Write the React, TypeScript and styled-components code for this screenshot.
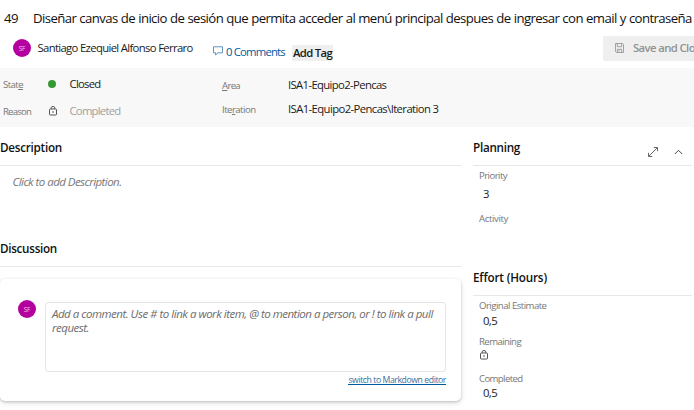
import React from "react";
import styled, { createGlobalStyle } from "styled-components";

const GlobalStyle = createGlobalStyle`
  * { box-sizing: border-box; }
  body {
    margin: 0;
    overflow: hidden;
    background: #fff;
    color: #1b1b1b;
    font-family: "Open Sans", "Noto Sans", sans-serif;
  }
`;

const Page = styled.div`
  width: 694px;
  height: 410px;
  overflow: hidden;
`;

const TitleRow = styled.header`
  display: flex;
  height: 36px;
  padding: 9px 0 0 4px;
  font-size: 13.2px;
  line-height: 18px;
  letter-spacing: -0.6px;
  word-spacing: 0.3px;
  white-space: nowrap;
  color: #111;
`;

const ItemId = styled.span`
  width: 29px;
`;

const Toolbar = styled.div`
  display: flex;
  align-items: flex-start;
  height: 32px;
  padding-left: 13px;
  white-space: nowrap;

  > * { flex: none; }
`;

const Avatar = styled.div<{ $top: number }>`
  display: flex;
  align-items: center;
  justify-content: center;
  flex: none;
  width: 18px;
  height: 18px;
  margin-top: ${(p) => p.$top}px;
  border-radius: 50%;
  background: #b4009e;
  color: #f0c4ea;
  font-size: 6.5px;
  letter-spacing: -0.2px;
`;

const Body = styled.span<{ $ls: number; $muted?: boolean }>`
  font-size: 11.3px;
  line-height: 16px;
  letter-spacing: ${(p) => p.$ls}px;
  white-space: nowrap;
  color: ${(p) => (p.$muted ? "#a0a0a0" : "#1b1b1b")};
`;

const Assignee = styled(Body)`
  width: 175.5px;
  margin: 4px 0 0 6.5px;
`;

const Comments = styled.a`
  display: flex;
  width: 79px;
  padding-top: 8px;
  color: #005a9e;
  font-size: 11.3px;
  line-height: 16px;
  letter-spacing: -0.8px;

  svg { margin: 2px 3px 0 0; }
`;

const TagButton = styled.button`
  width: 41px;
  height: 16px;
  margin-top: 9px;
  padding: 0 0 0 1px;
  border: 0;
  background: #efefef;
  color: #1b1b1b;
  font: 600 11.3px/16px "Open Sans", sans-serif;
  letter-spacing: -0.67px;
  text-align: left;
`;

const SaveButton = styled.button`
  display: flex;
  width: 110px;
  height: 25px;
  margin-left: 270px;
  padding: 4px 0 0 12px;
  border: 0;
  border-radius: 2px;
  background: #efefef;
  color: #929292;
  font: 600 11.3px/16px "Open Sans", sans-serif;
  letter-spacing: -0.6px;

  svg { margin: 3px 9px 0 0; }
`;

const Summary = styled.section`
  display: grid;
  grid-template-columns: 222px 1fr;
  height: 59px;
  background: #f8f8f8;
`;

const SummaryColumn = styled.div<{ $top: number; $rowHeight: number }>`
  display: grid;
  grid-auto-rows: ${(p) => p.$rowHeight}px;
  align-content: start;
  padding-top: ${(p) => p.$top}px;
`;

const StateRow = styled.div`
  display: grid;
  grid-template-columns: 45px 21.5px 1fr;
  padding-left: 3px;
`;

const PathRow = styled.div`
  display: grid;
  grid-template-columns: 66px 1fr;
`;

const Label = styled.label<{ $ls: number }>`
  display: block;
  padding-top: 1px;
  color: #777;
  font-size: 9.6px;
  line-height: 16px;
  letter-spacing: ${(p) => p.$ls}px;
  white-space: nowrap;
`;

const StateDot = styled.i`
  width: 8px;
  height: 8px;
  margin: 4px 0 0;
  border-radius: 50%;
  background: #339933;
`;

const LockCell = styled.span`
  padding: 3px 0 0 1px;

  svg { display: block; }
`;

const Main = styled.main`
  display: grid;
  grid-template-columns: 461px 219px;
  column-gap: 12px;
`;

const Heading = styled.h2<{ $ls: number }>`
  margin: 0;
  color: #111;
  font-size: 11.7px;
  font-weight: 600;
  line-height: 16px;
  letter-spacing: ${(p) => p.$ls}px;
  white-space: nowrap;
`;

const SectionHead = styled.div<{ $height: number; $top: number }>`
  display: flex;
  justify-content: space-between;
  height: ${(p) => p.$height}px;
  padding-top: ${(p) => p.$top}px;
  border-bottom: 1px solid #e8e8e8;
`;

const HeadIcons = styled.div`
  display: flex;
  gap: 16px;
  padding: 8px 9px 0 0;
`;

const DescriptionBody = styled.p`
  height: 64px;
  margin: 0;
  padding: 8px 0 0 12.5px;
  color: #777;
  font-size: 11.5px;
  font-style: italic;
  line-height: 16px;
  letter-spacing: -0.55px;
`;

const CommentCard = styled.section`
  display: flex;
  height: 122px;
  margin-top: 12px;
  padding-left: 18px;
  border-radius: 5px;
  box-shadow: 0 1px 3px rgba(0, 0, 0, 0.22), 0 3px 7px rgba(0, 0, 0, 0.08);
`;

const Editor = styled.div`
  width: 401px;
  margin: 23px 0 0 9px;
`;

const CommentInput = styled.div`
  height: 70px;
  padding: 4px 6px;
  border: 1px solid #e4e4e4;
  border-radius: 3px;
  color: #6c6c6c;
  font-size: 11.5px;
  font-style: italic;
  line-height: 14px;
  letter-spacing: -0.49px;
`;

const SwitchRow = styled.div`
  display: flex;
  justify-content: flex-end;
  padding-top: 3px;
`;

const SwitchLink = styled.a`
  height: 10px;
  border-bottom: 1px solid #005a9e;
  color: #3a6f9f;
  font-size: 8.7px;
  line-height: 10px;
  letter-spacing: -0.43px;
  white-space: nowrap;
`;

const Fields = styled.div<{ $height: number }>`
  height: ${(p) => p.$height}px;
  padding: 2px 0 0 6px;
`;

const Field = styled.div<{ $height: number; $gap?: number }>`
  height: ${(p) => p.$height}px;

  label { padding-top: 0; }

  > span {
    display: block;
    margin-top: ${(p) => p.$gap ?? 0}px;
    padding-left: 4px;
  }

  > svg { display: block; margin: 0 0 0 1px; }
`;

const LockIcon = () => (
  <svg width="8" height="10" viewBox="0 0 8 10" fill="none" stroke="#555" strokeWidth="1">
    <rect x=".5" y="3" width="7" height="6" rx="0.8" />
    <path d="M2.2 3V1.9a1.8 1.4 0 0 1 3.6 0V3" />
    <rect x="3.4" y="5.4" width="1.2" height="1.2" fill="#222" stroke="none" />
  </svg>
);

const CommentIcon = () => (
  <svg width="10" height="10" viewBox="0 0 10 10" fill="none" stroke="#4f87b5" strokeWidth="0.9">
    <path d="M.5.8h9v6H5L2.6 9V6.8H.5z" />
  </svg>
);

const SaveIcon = () => (
  <svg width="9" height="10" viewBox="0 0 9 10" fill="none" stroke="#999" strokeWidth="0.9">
    <path d="M.5.5h7l1 1v8h-7l-1-1z" />
    <path d="M2.3.5v3.2h4.4V.5M2.3 9.5V6.3h4.4v3.2M4 7v1.5" />
  </svg>
);

const ExpandIcon = () => (
  <svg width="10" height="10" viewBox="0 0 10 10" fill="none" stroke="#555" strokeWidth="0.9">
    <path d="M.8 9.2 9.2.8M5.8.5h3.7v3.7M.5 5.8v3.7h3.7" />
  </svg>
);

const ChevronIcon = () => (
  <svg width="9" height="10" viewBox="0 0 9 10" fill="none" stroke="#444" strokeWidth="1">
    <path d="M.8 7 4.5 3.3 8.2 7" />
  </svg>
);

export default function App() {
  return (
    <Page>
      <GlobalStyle />
      <TitleRow>
        <ItemId>49</ItemId>
        <span>
          Diseñar canvas de inicio de sesión que permita acceder al menú principal despues de ingresar con email y
          contraseña
        </span>
      </TitleRow>
      <Toolbar>
        <Avatar $top={3}>SF</Avatar>
        <Assignee $ls={-0.66}>Santiago Ezequiel Alfonso Ferraro</Assignee>
        <Comments>
          <CommentIcon />0 Comments
        </Comments>
        <TagButton>Add Tag</TagButton>
        <SaveButton>
          <SaveIcon />
          Save and Close
        </SaveButton>
      </Toolbar>
      <Summary>
        <SummaryColumn $top={8} $rowHeight={27}>
          <StateRow>
            <Label $ls={-0.57}>Stat<u>e</u></Label>
            <StateDot />
            <Body $ls={-0.73}>Closed</Body>
          </StateRow>
          <StateRow>
            <Label $ls={-0.82}>Reason</Label>
            <LockCell><LockIcon /></LockCell>
            <Body $ls={-0.76} $muted>Completed</Body>
          </StateRow>
        </SummaryColumn>
        <SummaryColumn $top={9} $rowHeight={24}>
          <PathRow>
            <Label $ls={-0.68}><u>A</u>rea</Label>
            <Body $ls={-0.64}>ISA1-Equipo2-Pencas</Body>
          </PathRow>
          <PathRow>
            <Label $ls={-0.53}>Ite<u>r</u>ation</Label>
            <Body $ls={-0.6}>ISA1-Equipo2-Pencas\Iteration 3</Body>
          </PathRow>
        </SummaryColumn>
      </Summary>
      <Main>
        <div>
          <SectionHead $height={39} $top={12}>
            <Heading $ls={-0.26}>Description</Heading>
          </SectionHead>
          <DescriptionBody>Click to add Description.</DescriptionBody>
          <SectionHead $height={37} $top={10}>
            <Heading $ls={-0.3}>Discussion</Heading>
          </SectionHead>
          <CommentCard>
            <Avatar $top={21}>SF</Avatar>
            <Editor>
              <CommentInput>
                Add a comment. Use # to link a work item, @ to mention a person, or ! to link a pull request.
              </CommentInput>
              <SwitchRow>
                <SwitchLink>switch to Markdown editor</SwitchLink>
              </SwitchRow>
            </Editor>
          </CommentCard>
        </div>
        <div>
          <SectionHead $height={39} $top={12}>
            <Heading $ls={-0.28}>Planning</Heading>
            <HeadIcons>
              <ExpandIcon />
              <ChevronIcon />
            </HeadIcons>
          </SectionHead>
          <Fields $height={91}>
            <Field $height={43} $gap={2}>
              <Label $ls={-0.55}>Priority</Label>
              <Body $ls={-0.6}>3</Body>
            </Field>
            <Field $height={43}>
              <Label $ls={-0.37}>Activity</Label>
            </Field>
          </Fields>
          <SectionHead $height={39} $top={12}>
            <Heading $ls={-0.17}>Effort (Hours)</Heading>
          </SectionHead>
          <Fields $height={110}>
            <Field $height={36} $gap={-1}>
              <Label $ls={-0.52}>Original Estimate</Label>
              <Body $ls={-0.6}>0,5</Body>
            </Field>
            <Field $height={37}>
              <Label $ls={-0.59}>Remaining</Label>
              <LockIcon />
            </Field>
            <Field $height={36} $gap={-2}>
              <Label $ls={-0.62}>Completed</Label>
              <Body $ls={-0.6}>0,5</Body>
            </Field>
          </Fields>
        </div>
      </Main>
    </Page>
  );
}
